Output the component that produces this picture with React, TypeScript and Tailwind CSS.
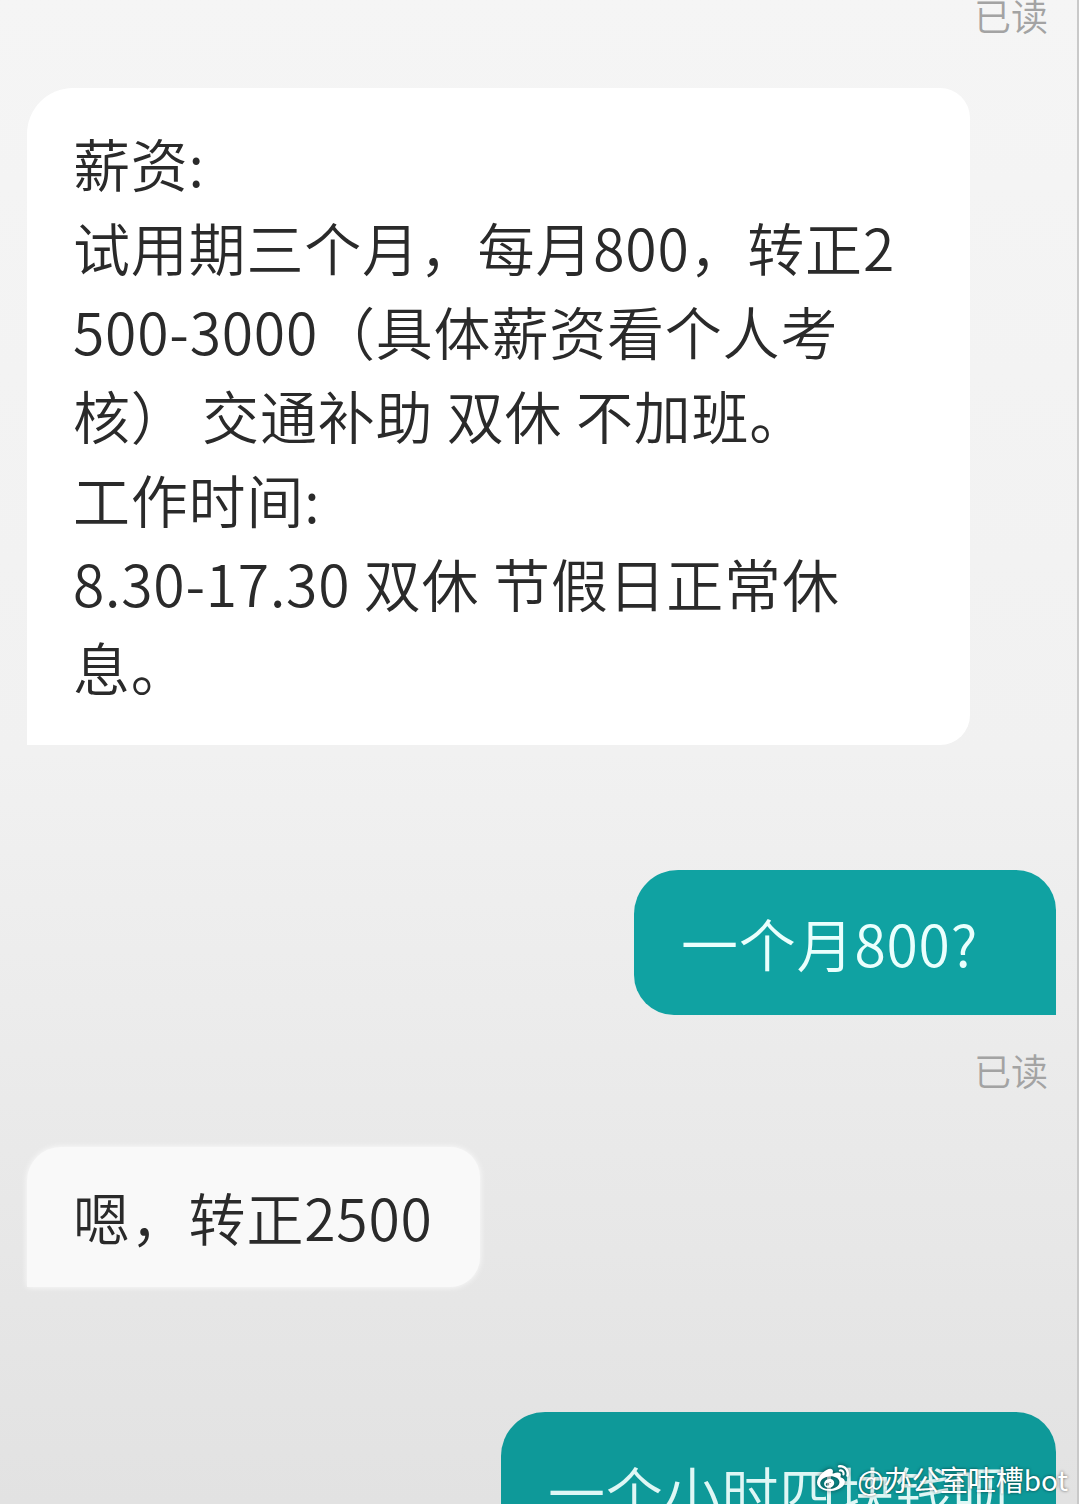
import { FaWeibo } from "react-icons/fa";

const cjk = { fontFamily: '"Noto Sans CJK SC", "Noto Sans", sans-serif' };

// Received message lines, broken where the reference wraps
const offerLines = [
  "薪资:",
  "试用期三个月，每月800，转正2",
  "500-3000（具体薪资看个人考",
  "核） 交通补助 双休 不加班。",
  "工作时间:",
  "8.30-17.30 双休 节假日正常休",
  "息。",
];

const ReadMark = ({ className = "" }: { className?: string }) => (
  <div className={`flex justify-end pr-[29px] text-[37px] leading-[40px] font-[350] text-[#a3a3a3] ${className}`}>
    已读
  </div>
);

const App = () => {
  return (
    <div
      style={cjk}
      className="relative w-[1079px] h-[1504px] overflow-hidden bg-gradient-to-b from-[#f5f5f5] via-[#f1f1f1] to-[#e2e2e2] border-r-2 border-[#c9c9c9]"
    >
      <div className="flex flex-col">
        <ReadMark className="-mt-[5px]" />

        {/* offer details */}
        <div className="ml-[27px] mt-[53px] w-[943px] h-[657px] bg-white rounded-tl-[46px] rounded-tr-[30px] rounded-br-[30px] pl-[46px] pt-[32px] text-[57px] leading-[84px] tracking-[0.8px] font-[350] text-[#2a2a2a]">
          {offerLines.map((line, i) => (
            <div key={i} className="whitespace-pre">
              {line}
            </div>
          ))}
        </div>

        {/* my reply */}
        <div className="flex justify-end pr-[21px] mt-[125px]">
          <div className="w-[422px] h-[145px] bg-[#10a2a2] rounded-tl-[44px] rounded-tr-[40px] rounded-bl-[40px] flex items-center pl-[47px] text-[57px] tracking-[0.8px] font-[350] text-[#eafffd]">
            一个月800?
          </div>
        </div>

        <ReadMark className="mt-[35px]" />

        {/* answer */}
        <div className="ml-[27px] mt-[57px] w-[453px] h-[140px] bg-[#f9f9f9] rounded-tl-[34px] rounded-tr-[30px] rounded-br-[30px] flex items-center pl-[46px] text-[57px] tracking-[0.8px] font-[350] text-[#2a2a2a] shadow-[0_0_6px_rgba(255,255,255,0.9)]">
          嗯，转正2500
        </div>

        {/* last reply, cut off */}
        <div className="flex justify-end pr-[21px] mt-[125px]">
          <div className="w-[555px] h-[160px] bg-[#0e9999] rounded-tl-[44px] rounded-tr-[40px] pl-[47px] pt-[36px] text-[57px] leading-[84px] tracking-[0.8px] font-[350] text-[#dff7f5]">
            一个小时四块钱呗
          </div>
        </div>
      </div>

      {/* watermark */}
      <div className="absolute right-[9px] bottom-[8px] flex items-center gap-[6px] text-white text-[28px] leading-[34px] [text-shadow:0_0_3px_rgba(0,0,0,0.6)]">
        <FaWeibo className="w-[36px] h-[32px] drop-shadow-[0_0_2px_rgba(0,0,0,0.6)]" />
        <span>@办公室吐槽bot</span>
      </div>
    </div>
  );
};

export default App;
